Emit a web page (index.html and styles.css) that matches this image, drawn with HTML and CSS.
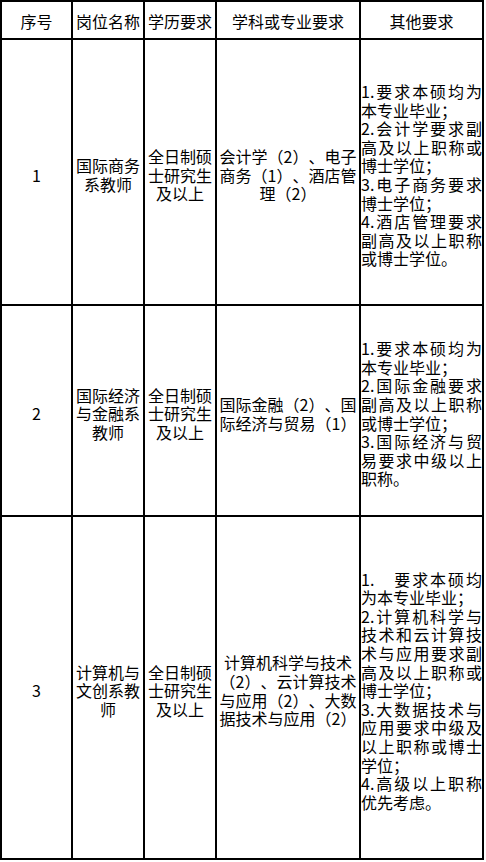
FILE: index.html
```html
<!DOCTYPE html>
<html lang="zh-CN">
<head>
<meta charset="utf-8">
<title>岗位要求</title>
<link rel="stylesheet" href="styles.css">
</head>
<body>
<div class="sheet">
  <div class="cell head"><div class="txt">序号</div></div>
  <div class="cell head"><div class="txt">岗位名称</div></div>
  <div class="cell head"><div class="txt">学历要求</div></div>
  <div class="cell head"><div class="txt">学科或专业要求</div></div>
  <div class="cell head"><div class="txt">其他要求</div></div>

  <div class="cell"><div class="txt">1</div></div>
  <div class="cell"><div class="txt">国际商务系教师</div></div>
  <div class="cell"><div class="txt">全日制硕士研究生及以上</div></div>
  <div class="cell"><div class="txt">会计学（2）、电子商务（1）、酒店管理（2）</div></div>
  <div class="cell other"><div class="txt">1.要求本硕均为本专业毕业；<br>2.会计学要求副高及以上职称或博士学位；<br>3.电子商务要求博士学位；<br>4.酒店管理要求副高及以上职称或博士学位。</div></div>

  <div class="cell"><div class="txt">2</div></div>
  <div class="cell"><div class="txt">国际经济与金融系教师</div></div>
  <div class="cell"><div class="txt">全日制硕士研究生及以上</div></div>
  <div class="cell"><div class="txt">国际金融（2）、国际经济与贸易（1）</div></div>
  <div class="cell other"><div class="txt">1.要求本硕均为本专业毕业；<br>2.国际金融要求副高及以上职称或博士学位；<br>3.国际经济与贸易要求中级以上职称。</div></div>

  <div class="cell"><div class="txt">3</div></div>
  <div class="cell"><div class="txt">计算机与文创系教师</div></div>
  <div class="cell"><div class="txt">全日制硕士研究生及以上</div></div>
  <div class="cell"><div class="txt">计算机科学与技术（2）、云计算技术与应用（2）、大数据技术与应用（2）</div></div>
  <div class="cell other"><div class="txt">1.　要求本硕均为本专业毕业；<br>2.计算机科学与技术和云计算技术与应用要求副高及以上职称或博士学位；<br>3.大数据技术与应用要求中级及以上职称或博士学位；<br>4.高级以上职称优先考虑。</div></div>
</div>
</body>
</html>
```

FILE: styles.css
```css
html, body {
  margin: 0;
  padding: 0;
  background: #fff;
}

.sheet {
  display: grid;
  grid-template-columns: 71px 72px 72px 144px 123px;
  grid-template-rows: 38px 266px 211px 343px;
  width: 484px;
  box-sizing: border-box;
  border-left: 2px solid #000;
  border-top: 2px solid #000;
  font-family: "Noto Sans CJK SC", "Noto Sans", sans-serif;
  font-size: 16px;
  line-height: 18.6px;
  color: #000;
  text-spacing-trim: space-all;
}

.cell {
  display: flex;
  align-items: center;
  box-sizing: border-box;
  border-right: 2px solid #000;
  border-bottom: 2px solid #000;
  padding: 6px 2px 0;
  min-width: 0;
}

.cell .txt {
  width: 100%;
  text-align: center;
}

.head {
  padding-top: 3px;
}

.other {
  padding: 6px 0 0;
}

.other .txt {
  text-align: justify;
}
```
